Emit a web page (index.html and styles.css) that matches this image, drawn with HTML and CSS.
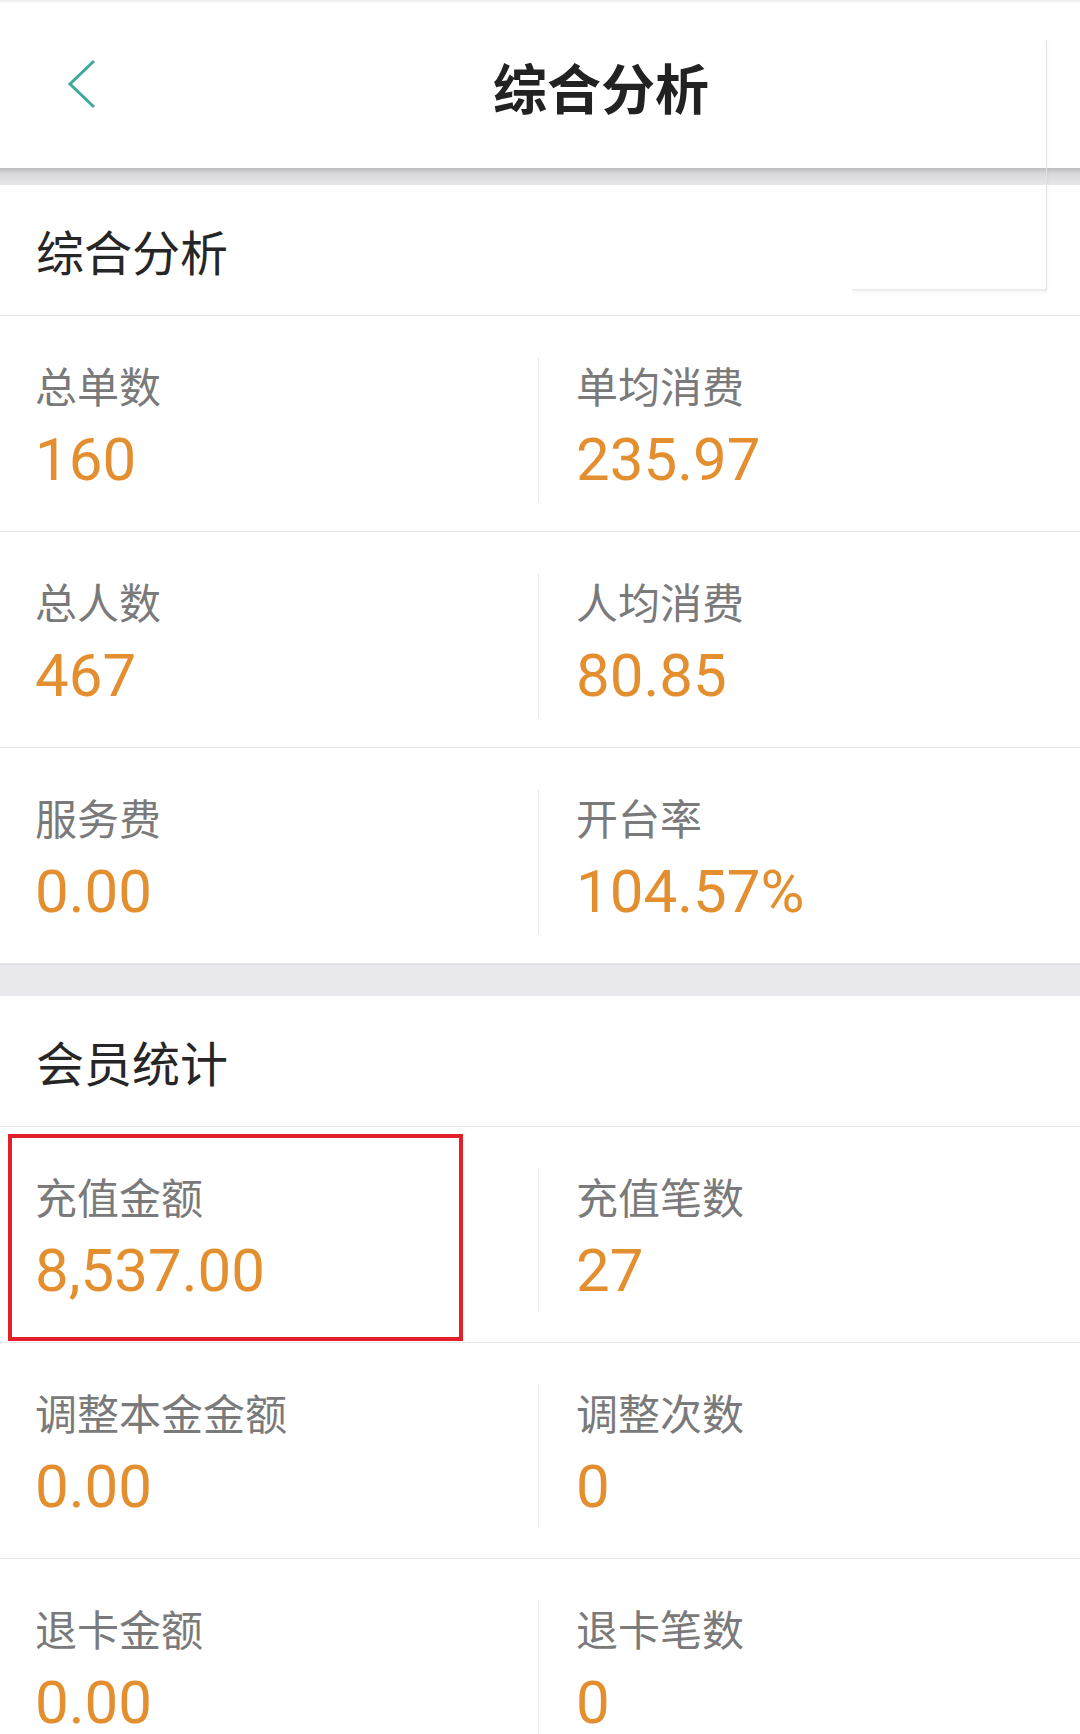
FILE: index.html
```html
<!DOCTYPE html>
<html>
<head>
  <title>综合分析</title>
  <meta name="viewport" content="width=device-width, initial-scale=1">
  <link rel="stylesheet" href="styles.css">
</head>
<body>
  <div class="page">
    <div class="topnav">
      <svg class="back" width="32" height="52" viewBox="0 0 32 52">
        <polyline points="28,3 4,26 28,49" fill="none" stroke="#3ea99c" stroke-width="3" stroke-linejoin="miter"/>
      </svg>
      <h1>综合分析</h1>
    </div>
    <div class="nav-shadow"></div>

    <section class="block">
      <h2>综合分析</h2>
      <div class="row">
        <div class="cell"><div class="label">总单数</div><div class="value">160</div></div>
        <div class="cell"><div class="label">单均消费</div><div class="value">235.97</div></div>
      </div>
      <div class="row">
        <div class="cell"><div class="label">总人数</div><div class="value">467</div></div>
        <div class="cell"><div class="label">人均消费</div><div class="value">80.85</div></div>
      </div>
      <div class="row">
        <div class="cell"><div class="label">服务费</div><div class="value">0.00</div></div>
        <div class="cell"><div class="label">开台率</div><div class="value">104.57%</div></div>
      </div>
    </section>

    <div class="gap"></div>

    <section class="block">
      <h2>会员统计</h2>
      <div class="row">
        <div class="cell"><div class="label">充值金额</div><div class="value">8,537.00</div><span class="mark"></span></div>
        <div class="cell"><div class="label">充值笔数</div><div class="value">27</div></div>
      </div>
      <div class="row">
        <div class="cell"><div class="label">调整本金金额</div><div class="value">0.00</div></div>
        <div class="cell"><div class="label">调整次数</div><div class="value">0</div></div>
      </div>
      <div class="row">
        <div class="cell"><div class="label">退卡金额</div><div class="value">0.00</div></div>
        <div class="cell"><div class="label">退卡笔数</div><div class="value">0</div></div>
      </div>
    </section>

    <div class="ghost-menu"></div>
  </div>
</body>
</html>
```

FILE: styles.css
```css
* {padding: 0; margin: 0; box-sizing: border-box;}
html {font-family: "Noto Sans CJK SC", "Noto Sans", sans-serif;}

body {margin: 0; background: #fff;}

.page {position: relative; height: 1734px; overflow: hidden; background: #fff;}

.topnav {height: 168px; display: flex; align-items: center; padding: 4px 0 0 66px; background: #fff; border-top: 2px solid #f0f0f2;}
.topnav .back {display: block; margin-top: -6px;}
.topnav h1 {margin-left: 395px; font-size: 54px; font-weight: 700; color: #222; line-height: 1;}

.nav-shadow {height: 17px; background: linear-gradient(#bcbcc1 0%, #d9d9dd 35%, #e6e6ea 100%);}

.block {background: #fff;}
.block h2 {height: 131px; display: flex; align-items: center; padding: 0 0 0 36px; font-size: 48px; font-weight: 400; color: #262626; border-bottom: 1px solid #e6e6e6;}

.row {display: flex; padding: 42px 0 29px; border-bottom: 1px solid #e6e6e6;}
.row .cell {position: relative; height: 144px; padding-left: 35px;}
.row .cell:first-child {width: 538px;}
.row .cell:last-child {flex: 1; padding-left: 37px; border-left: 1px solid #ececec;}

.label {margin-top: 3px; font-size: 42px; line-height: 48px; color: #7a7a7a; white-space: nowrap;}
.value {margin-top: 15px; font-family: Roboto, "Liberation Sans", sans-serif; font-size: 60px; line-height: 72px; color: #e38f2f; white-space: nowrap;}

.gap {height: 32px; background: #e9e8ed; border-top: 1px solid #dededf;}

/* red highlight round the first member figure */
.mark {position: absolute; left: 8px; top: -35px; width: 455px; height: 207px; border: 4px solid #e3202a;}

/* faint leftover popup outline at the top right */
.ghost-menu {position: absolute; left: 852px; top: 40px; width: 195px; height: 251px; border-right: 1px solid #e2e2e2; border-bottom: 2px solid #ececec; box-shadow: 1px 2px 3px rgba(0,0,0,0.03); pointer-events: none;}
```
